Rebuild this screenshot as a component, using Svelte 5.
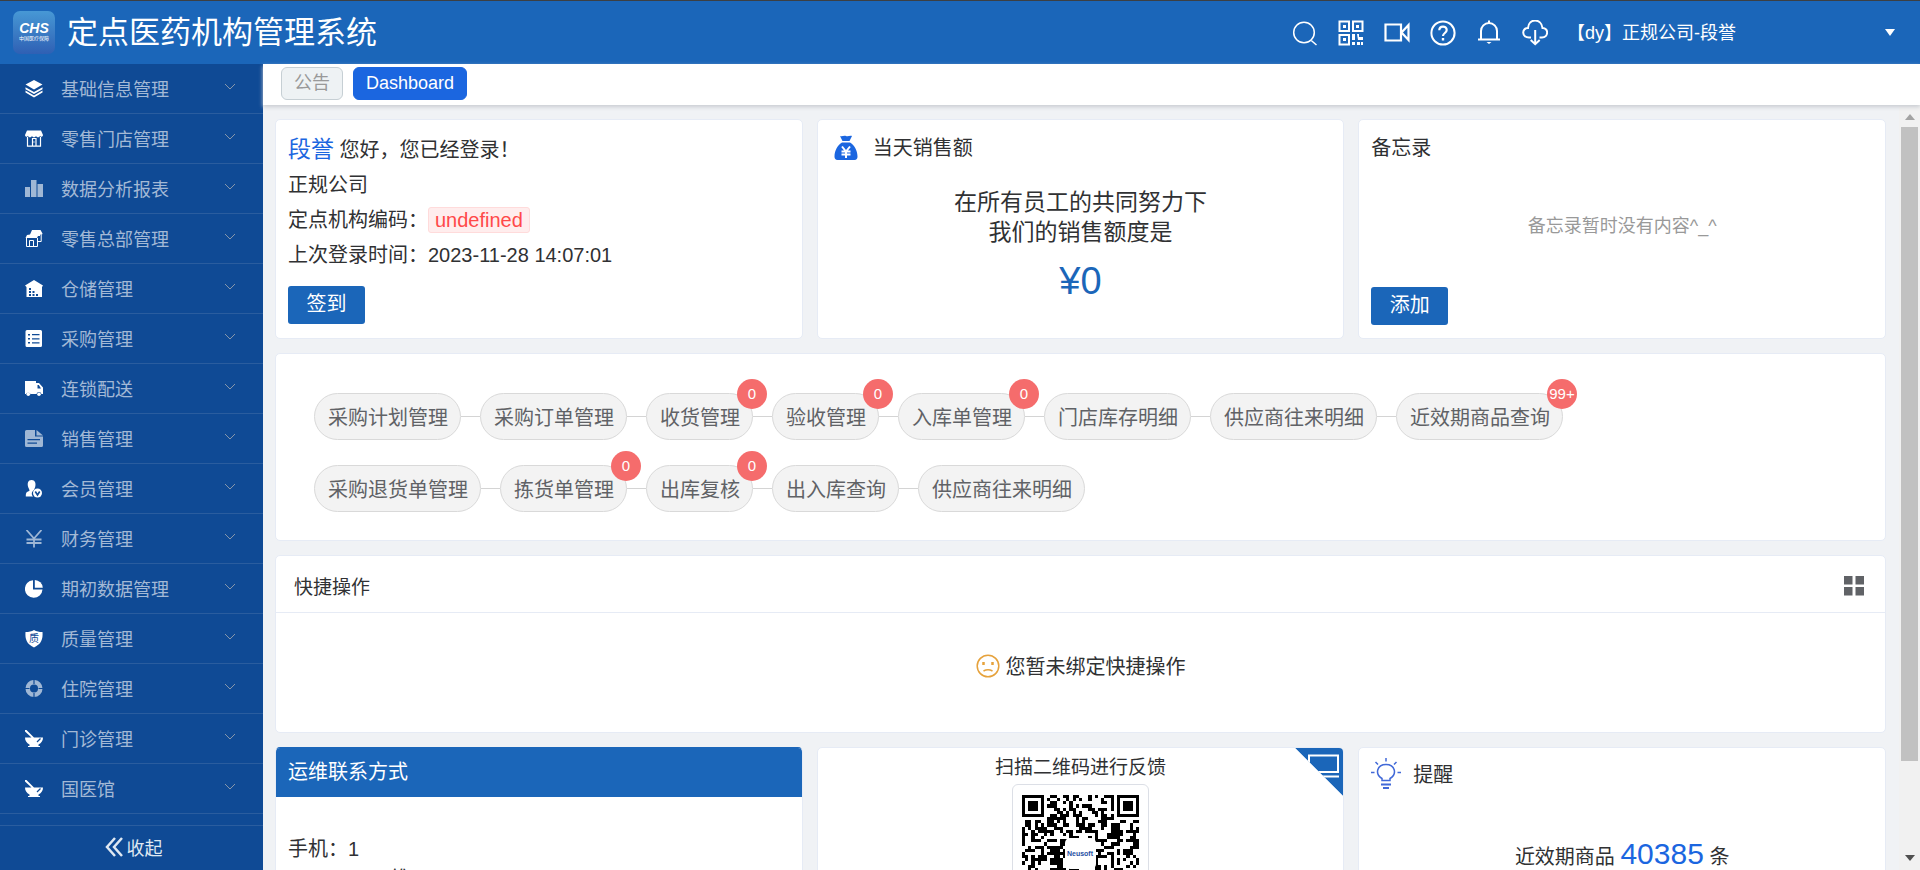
<script>
    /* ========================= Icons ========================= */

    const menuIcons = {
        layers:
            '<path d="M9 0 17.5 4.6 9 9.6.5 4.6z"/><path d="M.5 7.2 9 12l8.500-4.800v2L9 14 .5 9.200z"/><path d="M.5 10.600 9 15.400l8.500-4.800v2L9 17.500.5 12.600z"/>',
        shop:
            '<path d="M2 .5h14l2 4.500c0 2-2.600 2.400-3 .800-.6 2-3.400 2-4 0-.6 2-3.400 2-4 0-.6 2-3.400 2-4 0C2.500 7.400 0 7 0 5z"/><path d="M2.500 7v9.200h13V7M7.500 16V8.500h3.500V16M9 11.500v1" fill="none" stroke="currentColor" stroke-width="1.200"/>',
        bars: '<path d="M0 7h5v10H0zM6 0h5.500v17H6zM12.500 4h5.500v13h-5.500z"/>',
        shops:
            '<path d="M7 0h8.500l2 3.500c0 1.500-2 2-2.500.8V6h-2L12 8H.5l1.500-3 3-.500z"/><path d="M1.500 8v8.500h11V8M4.500 16V10.500M4.500 10.500h4V16M16.200 5v6.500h-3.500" fill="none" stroke="currentColor" stroke-width="1"/>',
        warehouse:
            '<path fill-rule="evenodd" d="M9 0l9 5.500-1 1.500V17H1.500V7L0 5.500zM4 8v2h2V8zm0 3v2h2v-2zm0 3v2h2v-2zm3.500-3v2h2v-2zm0 3v2h2v-2zm3.500 0v2h2v-2z"/>',
        list:
            '<path fill-rule="evenodd" d="M2 0h13.500Q17 0 17 1.500v14Q17 17 15.500 17H2Q.5 17 .5 15.500v-14Q.5 0 2 0zM3 4v1.500h2V4zm4 0v1.200h7.500V4zM3 8v1.500h2V8zm4 .2v1.200h7.500V8.200zM3 12v1.500h2V12zm4 .3v1.200h7.500v-1.200z"/>',
        truck:
            '<path fill-rule="evenodd" d="M0 1h11v2h3l4 4.500V14h-1.500a2.600 2.600 0 0 0-5 0H5.500a2.600 2.600 0 0 0-4.500 0H0zM12.500 5v3.500h3.500L13.800 5z"/><circle cx="3.300" cy="14.200" r="1.800"/><circle cx="14" cy="14.200" r="1.800"/>',
        doc:
            '<path fill-rule="evenodd" d="M1.500 0H10v6.500h8V15.500Q18 17 16.500 17h-15Q0 17 0 15.500v-14Q0 0 1.500 0zM2.500 9v1.200H15V9zm0 3.500v1.200h9.500v-1.200z"/><path d="M11.500 0 18 5.500h-6.500z"/>',
        member:
            '<path d="M6.500 0C11 0 11 5 10 7.500 9.500 9 9 9 9 10c-3 2-2.500 5-1 6.500H.8C.8 12 2 12 4.500 10.800 4.500 9 3.500 8.500 3 6.500 2.300 3 3 0 6.500 0z"/><circle cx="12.500" cy="13" r="4.500"/><path d="M10.300 11.500 12.500 15l2.200-3.500" fill="none" stroke="#0f4a95" stroke-width="1.600"/>',
        yen: '<path d="M1.500 0 9 8.500 16.500 0M1.500 9.500h15M1.500 13h15M9 8.500V17.500" fill="none" stroke="currentColor" stroke-width="1.800"/>',
        pie: '<path d="M8 .200V9.500h9.500A8.800 8.800 0 1 1 8 .200z"/><path d="M9.800 0A8.300 8.300 0 0 1 17.800 7.800H9.800z"/>',
        shield:
            '<path d="M9 0c2.500 1.500 5 2 8.500 2 .5 7-1 12-8.500 15.500C1.500 14 0 9 .5 2 4 2 6.500 1.500 9 0z"/><text x="9" y="12" text-anchor="middle" font-size="10" fill="#0f4a95">质</text>',
        ring:
            '<circle cx="9" cy="8.500" r="6.300" fill="none" stroke="currentColor" stroke-width="4.500"/><path d="M9-1v5M9 13v5M0 8.500h4.500M13.500 8.500H18" stroke="#0f4a95" stroke-width="1.200"/>',
        mortar:
            '<path d="M0 0l1.500 0L9 7.500h9c0 3-1.500 5.500-4.500 7v1.500h1.500v1H3v-1h1.500v-1.500C1.500 13 0 10.500 0 7.500h6.500L0 1.500z"/><path d="M15.500 8.500 12 12" stroke="#0f4a95" stroke-width="1.200"/>',
    };

    const headerIcons = [
        {
            label: "搜索",
            body: '<circle cx="12" cy="12.500" r="10.300"/><path d="M19.300 20.500 24.500 25"/>',
        },
        {
            label: "二维码",
            body: '<path d="M1.500 1.500h9.500V11H1.500zM15 1.500h9.500V11H15zM1.500 15h9.500v9.500H1.500z" stroke-width="2"/><path d="M5 5h3v3H5zM18 5h3v3h-3zM5 18h3v3H5zM14 14h3v6h-3zM19 14h2v3h4v3h-5zM14 22h3v3h-3zM19 22h3v3h-3zM23 22h2v3h-2z" fill="currentColor" stroke="none"/>',
        },
        {
            label: "视频",
            body: '<path d="M1.500 4.500H17v16H1.500zM17.500 12.500 24.500 5v15z" stroke-width="2.200"/>',
        },
        {
            label: "帮助",
            body: '<circle cx="13" cy="13" r="11.600" stroke-width="2"/><path d="M9.300 10.200C9.300 5.500 16.700 5.500 16.700 10c0 3-3.700 3-3.700 6" stroke-width="2.200"/><path d="M13 18v2.500" stroke-width="2.400"/>',
        },
        {
            label: "通知",
            body: '<path d="M2 19.500h22M5 19.500V11a8 8 0 0 1 16 0v8.500M13 .5V3" stroke-width="2"/><path d="M10.500 22h5l-2.500 2z" fill="currentColor" stroke="none"/>',
        },
        {
            label: "下载",
            body: '<path d="M9 17.500H7C-.5 17.500-.5 8 6 8 6.500-2 19.500-2 20.500 8c6.500 0 6 9.500-.5 9.500h-2.500" stroke-width="2"/><path d="M13.200 10v14M8.700 20l4.500 4.200 4.500-4.200" stroke-width="2"/>',
        },
    ];

    /* ========================= Data ========================= */

    const menuItems = [
        { name: "基础信息管理", icon: "layers" },
        { name: "零售门店管理", icon: "shop" },
        { name: "数据分析报表", icon: "bars", dim: true },
        { name: "零售总部管理", icon: "shops" },
        { name: "仓储管理", icon: "warehouse" },
        { name: "采购管理", icon: "list" },
        { name: "连锁配送", icon: "truck" },
        { name: "销售管理", icon: "doc", dim: true },
        { name: "会员管理", icon: "member" },
        { name: "财务管理", icon: "yen", dim: true },
        { name: "期初数据管理", icon: "pie" },
        { name: "质量管理", icon: "shield" },
        { name: "住院管理", icon: "ring", dim: true },
        { name: "门诊管理", icon: "mortar" },
        { name: "国医馆", icon: "mortar" },
    ];

    const flows = [
        [
            { name: "采购计划管理" },
            { name: "采购订单管理" },
            { name: "收货管理", badge: "0" },
            { name: "验收管理", badge: "0" },
            { name: "入库单管理", badge: "0" },
            { name: "门店库存明细" },
            { name: "供应商往来明细" },
            { name: "近效期商品查询", badge: "99+" },
        ],
        [
            { name: "采购退货单管理" },
            { name: "拣货单管理", badge: "0" },
            { name: "出库复核", badge: "0" },
            { name: "出入库查询" },
            { name: "供应商往来明细" },
        ],
    ];

    let activeTab = $state("Dashboard");

    /* ========================= QR code ========================= */

    const qrSize = 37;

    function finderModule(x, y) {
        const corners = [[0, 0], [qrSize - 7, 0], [0, qrSize - 7]];
        for (const [cx, cy] of corners) {
            const dx = x - cx;
            const dy = y - cy;
            if (dx >= -1 && dx <= 7 && dy >= -1 && dy <= 7) {
                const ring = Math.max(Math.abs(dx - 3), Math.abs(dy - 3));
                return ring == 3 || ring <= 1;
            }
        }
        return null;
    }

    function buildQr() {
        let path = "";
        let seed = 20231128;
        for (let y = 0; y < qrSize; y++) {
            for (let x = 0; x < qrSize; x++) {
                seed = (seed * 1103515245 + 12345) % 2147483648;
                const finder = finderModule(x, y);
                const dark = finder === null ? seed / 2147483648 < 0.5 : finder;
                if (dark) path += `M${x} ${y}h1v1h-1z`;
            }
        }
        return path;
    }

    const qrPath = buildQr();
</script>

<div class="page">
    <header class="topbar">
        <svg class="logo" viewBox="0 0 42 43" aria-hidden="true">
            <defs>
                <linearGradient id="logo-fill" x1="0" y1="0" x2="0" y2="1">
                    <stop offset="0" stop-color="#4798d5" />
                    <stop offset="1" stop-color="#2f60b4" />
                </linearGradient>
            </defs>
            <rect width="42" height="43" rx="7" fill="url(#logo-fill)" />
            <text x="21" y="22" text-anchor="middle" class="logo-name">CHS</text>
            <text x="21" y="29" text-anchor="middle" class="logo-sub">中国医疗保障</text>
        </svg>
        <h1>定点医药机构管理系统</h1>
        <div class="tools">
            {#each headerIcons as icon}
                <button class="tool" aria-label={icon.label}>
                    <svg viewBox="0 0 26 26" fill="none" stroke="currentColor" stroke-width="1.5">{@html icon.body}</svg>
                </button>
            {/each}
        </div>
        <button class="user">
            <span>【dy】正规公司-段誉</span>
            <svg class="caret" viewBox="0 0 10 7"><path d="M0 0h10L5 7z" /></svg>
        </button>
    </header>

    <div class="body">
        <nav class="sidebar">
            <ul>
                {#each menuItems as item}
                    <li>
                        <button class="menu-item">
                            <svg class="menu-icon" class:dim={item.dim} viewBox="0 0 18 18">{@html menuIcons[item.icon]}</svg>
                            <span>{item.name}</span>
                            <svg class="chevron" viewBox="0 0 12 7"><path d="M1 1l5 5 5-5" /></svg>
                        </button>
                    </li>
                {/each}
            </ul>
            <button class="collapse">
                <svg viewBox="0 0 18 20"><path d="M10 1 2 10l8 9M17 1 9 10l8 9" /></svg>
                <span>收起</span>
            </button>
        </nav>

        <div class="content">
            <div class="tabs">
                {#each ["公告", "Dashboard"] as tab}
                    <button class="tab" class:active={activeTab == tab} onclick={() => (activeTab = tab)}>{tab}</button>
                {/each}
            </div>

            <div class="scroller">
                <main>
                    <div class="row top-row">
                        <section class="card welcome">
                            <p><span class="user-name">段誉</span> 您好，您已经登录！</p>
                            <p>正规公司</p>
                            <p>定点机构编码：<span class="tag">undefined</span></p>
                            <p>上次登录时间：2023-11-28 14:07:01</p>
                            <button class="primary">签到</button>
                        </section>

                        <section class="card sales">
                            <h2>
                                <svg class="bag" viewBox="0 0 24 26">
                                    <path d="M6 1c2 1 4-1 6 0s4-1 6 0l-2.500 5h-7zM8 7.500h8c4 2 7.500 8 7.500 14 0 2-1 3.500-3 3.500h-17c-2 0-3-1.500-3-3.500C.5 15.500 4 9.500 8 7.500z" />
                                    <path class="bag-sign" d="M8 11.500l4 5 4-5M7.500 16.500h9M7.500 19.500h9M12 16.500V23" />
                                </svg>
                                <span>当天销售额</span>
                            </h2>
                            <p>在所有员工的共同努力下<br />我们的销售额度是</p>
                            <strong>¥0</strong>
                        </section>

                        <section class="card memo">
                            <h2>备忘录</h2>
                            <p>备忘录暂时没有内容^_^</p>
                            <button class="primary">添加</button>
                        </section>
                    </div>

                    <section class="card flow">
                        {#each flows as flow}
                            <ol>
                                {#each flow as step}
                                    <li>
                                        <button class="step">
                                            {step.name}
                                            {#if step.badge}
                                                <span class="badge">{step.badge}</span>
                                            {/if}
                                        </button>
                                    </li>
                                {/each}
                            </ol>
                        {/each}
                    </section>

                    <section class="card quick">
                        <div class="quick-head">
                            <h2>快捷操作</h2>
                            <button class="grid-button" aria-label="设置快捷操作">
                                <svg viewBox="0 0 20 20"><path d="M0 0h8.500v8.500H0zM11.500 0H20v8.500h-8.500zM0 11h8.500v8.500H0zM11.500 11H20v8.500h-8.500z" /></svg>
                            </button>
                        </div>
                        <p class="quick-empty">
                            <svg viewBox="0 0 24 24">
                                <circle cx="12" cy="12" r="10.800" />
                                <path d="M7.500 17q4.500-2.500 9 0" />
                                <path class="eyes" d="M7.500 8v3M16.500 8v3" />
                            </svg>
                            <span>您暂未绑定快捷操作</span>
                        </p>
                    </section>

                    <div class="row bottom-row">
                        <section class="card ops">
                            <h2>运维联系方式</h2>
                            <p>手机：1</p>
                            <p class="ops-note">维</p>
                        </section>

                        <section class="card feedback">
                            <svg class="corner" viewBox="0 0 50 50">
                                <defs>
                                    <clipPath id="corner-clip"><path d="M0 0h50v50z" /></clipPath>
                                </defs>
                                <g clip-path="url(#corner-clip)">
                                    <path class="corner-fill" d="M0 0h50v50z" />
                                    <path class="corner-line" d="M15 8.500h29v16.500H15zM10 29.500h35" />
                                </g>
                            </svg>
                            <h2>扫描二维码进行反馈</h2>
                            <div class="qr">
                                <svg viewBox="0 0 117 117" role="img" aria-label="反馈二维码">
                                    <g transform="scale(3.162)" shape-rendering="crispEdges"><path d={qrPath} /></g>
                                    <rect x="43" y="43" width="31" height="31" rx="5" fill="#fff" />
                                    <text x="58" y="61" text-anchor="middle" class="qr-name">Neusoft</text>
                                </svg>
                            </div>
                        </section>

                        <section class="card remind">
                            <h2>
                                <svg class="bulb" viewBox="0 0 30 31">
                                    <path d="M11 22.500v-2C3.500 16 6 6.500 15 6.500s11.500 9.500 4 14v2zM15 0v3.500M0 14.500h3.500M26.500 14.500H30M4.500 4l2.500 2.500M25.500 4 23 6.500" />
                                    <path class="bulb-base" d="M10 26.500h10M12 30h6" />
                                </svg>
                                <span>提醒</span>
                            </h2>
                            <p>近效期商品 <a href="#expiring">40385</a> 条</p>
                        </section>
                    </div>
                </main>

                <div class="scrollbar" aria-hidden="true">
                    <svg viewBox="0 0 10 6"><path d="M0 6h10L5 0z" fill="#a3a3a3" /></svg>
                    <div class="track"><div class="thumb"></div></div>
                    <svg viewBox="0 0 10 6"><path d="M0 0h10L5 6z" fill="#505050" /></svg>
                </div>
            </div>
        </div>
    </div>
</div>

<style>
    :global(body) {
        margin: 0;
        overflow: hidden;
    }

    .page {
        --blue: #1b66b9;
        --bright: #1b66e0;
        --side: #0f4a95;
        display: flex;
        flex-direction: column;
        height: 100vh;
        font-family: "Liberation Sans", "Noto Sans CJK SC", sans-serif;
        font-size: 20px;
        color: #303133;
        background: #f0f2f5;
        & * {
            box-sizing: border-box;
        }
        & h1,
        & h2,
        & p,
        & ul,
        & ol {
            margin: 0;
            padding: 0;
            font-weight: inherit;
            list-style: none;
        }
        & h2 {
            font-size: 20px;
        }
        & button {
            font: inherit;
            color: inherit;
            border: none;
            background: none;
            padding: 0;
            cursor: pointer;
        }
        & svg {
            display: block;
            flex: none;
        }
    }

    /* ========================= Header ========================= */

    .topbar {
        display: flex;
        align-items: center;
        flex: none;
        height: 64px;
        padding: 0 25px 0 13px;
        border-top: 1px solid #3c3f43;
        background: var(--blue);
        color: #fff;
        & h1 {
            flex: 1;
            margin-left: 12px;
            font-size: 31px;
            line-height: 40px;
        }
    }

    .logo {
        width: 42px;
        height: 43px;
    }

    .logo-name {
        fill: #fff;
        font-size: 14px;
        font-weight: bold;
        font-style: italic;
    }

    .logo-sub {
        fill: #fff;
        font-size: 5px;
    }

    .tools {
        display: flex;
        gap: 20px;
        margin-right: 19px;
    }

    .tool svg {
        width: 26px;
        height: 26px;
    }

    .page .user {
        display: flex;
        align-items: center;
        justify-content: space-between;
        width: 328px;
        font-size: 18px;
        line-height: 26px;
    }

    .caret {
        width: 10px;
        height: 7px;
        fill: #fff;
    }

    .body {
        display: flex;
        flex: 1;
        min-height: 0;
    }

    /* ========================= Sidebar ========================= */

    .sidebar {
        display: flex;
        flex-direction: column;
        flex: none;
        width: 263px;
        background: var(--side);
        & ul {
            flex: 1;
            min-height: 0;
            overflow: hidden;
        }
        & li {
            border-bottom: 1px solid #2a5d9f;
        }
    }

    .page .menu-item {
        display: flex;
        align-items: center;
        width: 100%;
        height: 49px;
        padding: 0 27px 0 25px;
        font-size: 18px;
        color: #a3b9d6;
        & span {
            flex: 1;
            margin-left: 18px;
            padding-bottom: 2px;
            text-align: left;
        }
    }

    .menu-icon {
        width: 18px;
        height: 18px;
        color: #fff;
        fill: currentColor;
    }

    .menu-icon.dim {
        color: #9fb7d5;
    }

    .chevron {
        width: 12px;
        height: 7px;
        margin-bottom: 4px;
        fill: none;
        stroke: #8797ab;
    }

    .page .collapse {
        display: flex;
        align-items: center;
        justify-content: center;
        gap: 4px;
        height: 45px;
        padding: 0 0 2px 4px;
        border-top: 1px solid #2a5d9f;
        font-size: 18px;
        color: #dfe8f2;
        & svg {
            width: 18px;
            height: 20px;
            fill: none;
            stroke: currentColor;
            stroke-width: 2.5;
        }
    }

    /* ========================= Content ========================= */

    .content {
        display: flex;
        flex-direction: column;
        flex: 1;
        min-width: 0;
    }

    .tabs {
        display: flex;
        align-items: flex-start;
        gap: 10px;
        flex: none;
        height: 41px;
        padding: 3px 18px;
        background: #fff;
        box-shadow: 0 2px 4px #c9ccd2;
        z-index: 1;
    }

    .page .tab {
        height: 33px;
        padding: 0 12px 2px;
        border: 1px solid #c6cfd4;
        border-radius: 6px;
        background: #eef2f4;
        font-size: 18px;
        line-height: 28px;
        color: #999;
    }

    .page .tab.active {
        border-color: var(--bright);
        background: var(--bright);
        color: #fff;
    }

    .scroller {
        display: flex;
        flex: 1;
        min-height: 0;
        overflow: hidden;
    }

    main {
        display: flex;
        flex-direction: column;
        gap: 14px;
        flex: 1;
        min-width: 0;
        padding: 14px 13px 14px 12px;
    }

    .row {
        display: grid;
        grid-template-columns: repeat(3, 1fr);
        gap: 14px;
        flex: none;
    }

    .card {
        flex: none;
        border: 1px solid #e6ebf5;
        border-radius: 5px;
        background: #fff;
    }

    .page .primary {
        align-self: flex-start;
        min-width: 77px;
        height: 38px;
        padding: 0 18px 2px;
        border-radius: 3px;
        background: var(--blue);
        color: #fff;
        line-height: 36px;
    }

    .top-row .card {
        display: flex;
        flex-direction: column;
        height: 220px;
        padding: 13px 12px;
    }

    .welcome {
        line-height: 35px;
        & .primary {
            margin-top: 13px;
        }
    }

    .user-name {
        font-size: 23px;
        line-height: 1;
        color: var(--bright);
    }

    .tag {
        display: inline-block;
        height: 26px;
        padding: 0 6px;
        border: 1px solid #ffdbdb;
        border-radius: 3px;
        background: #ffeded;
        line-height: 24px;
        color: #ff4949;
    }

    .sales {
        align-items: center;
        & h2 {
            display: flex;
            align-items: center;
            gap: 15px;
            align-self: stretch;
            padding-left: 4px;
            line-height: 30px;
        }
        & p {
            margin-top: 24px;
            font-size: 23px;
            line-height: 30px;
            text-align: center;
        }
        & strong {
            margin-top: 12px;
            font-size: 38px;
            font-weight: inherit;
            line-height: 44px;
            color: var(--blue);
        }
    }

    .bag {
        width: 24px;
        height: 26px;
        fill: var(--bright);
    }

    .bag-sign {
        fill: none;
        stroke: #fff;
        stroke-width: 2;
    }

    .memo {
        & h2 {
            line-height: 30px;
        }
        & p {
            flex: 1;
            padding-top: 50px;
            font-size: 18px;
            line-height: 26px;
            text-align: center;
            color: #999;
        }
    }

    /* ========================= Flow steps ========================= */

    .flow {
        display: flex;
        flex-direction: column;
        gap: 25px;
        height: 188px;
        padding: 39px 38px;
        & ol {
            display: flex;
        }
        & li {
            display: flex;
            align-items: center;
        }
        & li + li::before {
            content: "";
            width: 19px;
            height: 1px;
            background: #d4d4d4;
        }
    }

    .page .step {
        position: relative;
        height: 47px;
        padding: 0 12px 0 13px;
        border: 1px solid #d9d9d9;
        border-radius: 24px;
        background: #f3f3f3;
        color: #606266;
        white-space: nowrap;
    }

    .badge {
        position: absolute;
        top: -15px;
        right: -15px;
        width: 30px;
        height: 30px;
        border-radius: 50%;
        background: #f56c6c;
        font-size: 15px;
        line-height: 30px;
        text-align: center;
        color: #fff;
    }

    /* ========================= Quick actions ========================= */

    .quick {
        height: 178px;
    }

    .quick-head {
        display: flex;
        align-items: center;
        justify-content: space-between;
        height: 57px;
        padding: 4px 21px 0 18px;
        border-bottom: 1px solid #e6ebf5;
        & h2 {
            padding-bottom: 2px;
            font-size: 19px;
        }
    }

    .grid-button svg {
        width: 20px;
        height: 20px;
        fill: #606266;
    }

    .quick-empty {
        display: flex;
        align-items: center;
        justify-content: center;
        gap: 6px;
        height: 105px;
        & svg {
            width: 24px;
            height: 24px;
            fill: none;
            stroke: #e6a23c;
            stroke-width: 1.5;
        }
        & .eyes {
            stroke-width: 2.5;
        }
    }

    /* ========================= Bottom row ========================= */

    .bottom-row .card {
        position: relative;
        height: 280px;
        overflow: hidden;
    }

    .bottom-row .ops {
        border-top-color: var(--blue);
        & h2 {
            padding-left: 12px;
            background: var(--blue);
            line-height: 49px;
            color: #fff;
        }
        & p {
            padding-left: 12px;
            line-height: 30px;
        }
        & h2 + p {
            margin-top: 37px;
        }
        & .ops-note {
            padding-left: 114px;
        }
    }

    .feedback {
        display: flex;
        flex-direction: column;
        align-items: center;
        & h2 {
            margin-top: 4px;
            font-size: 19px;
            line-height: 32px;
        }
    }

    .corner {
        position: absolute;
        top: -1px;
        right: -1px;
        width: 50px;
        height: 50px;
    }

    .corner-fill {
        fill: var(--blue);
    }

    .corner-line {
        fill: none;
        stroke: #fff;
        stroke-width: 2;
    }

    .qr {
        padding: 10px 9px;
        border: 1px solid #dcdfe6;
        border-radius: 6px;
        & svg {
            width: 117px;
            height: 117px;
        }
    }

    .qr-name {
        font-size: 7px;
        font-weight: bold;
        fill: #1f4fa3;
    }

    .remind {
        & h2 {
            display: flex;
            align-items: center;
            gap: 12px;
            padding: 10px 12px 0;
        }
        & p {
            margin-top: 49px;
            line-height: 32px;
            text-align: center;
        }
        & a {
            font-size: 30px;
            color: var(--bright);
            text-decoration: none;
        }
    }

    .bulb {
        width: 30px;
        height: 31px;
        fill: none;
        stroke: #4169d8;
        stroke-width: 1.5;
    }

    .bulb-base {
        stroke-width: 2;
    }

    /* ========================= Scrollbar ========================= */

    .scrollbar {
        display: flex;
        flex-direction: column;
        align-items: center;
        gap: 7px;
        flex: none;
        width: 21px;
        padding: 9px 0;
        background: #f1f1f1;
        & svg {
            width: 10px;
            height: 6px;
        }
        & .track {
            flex: 1;
            align-self: stretch;
            padding: 0 2px;
        }
        & .thumb {
            height: 88%;
            background: #c1c1c1;
        }
    }
</style>
